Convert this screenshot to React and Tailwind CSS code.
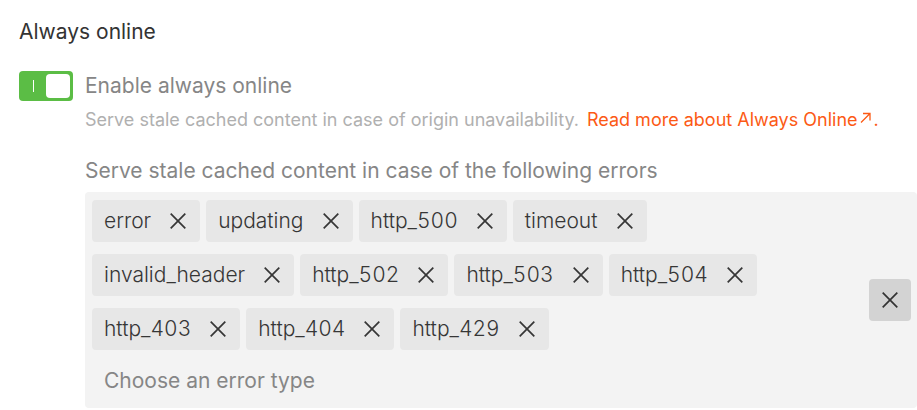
const TAGS = ['error', 'updating', 'http_500', 'timeout', 'invalid_header', 'http_502', 'http_503', 'http_504', 'http_403', 'http_404', 'http_429'];

function Cross() {
  return (
    <svg className="size-4" viewBox="0 0 16 16" fill="none" stroke="currentColor" strokeWidth="1.7" aria-hidden="true">
      <path d="M.7.7 15.3 15.3M15.3.7.7 15.3" />
    </svg>
  );
}

export default function App() {
  return (
    <main className="pt-4 pl-[19px] font-['Inter',sans-serif] text-[21px] text-[#868686]">
      <h2 className="leading-8 text-[#333333]">Always online</h2>
      <section className="mt-[23px] flex items-start gap-3">
        <label className="relative flex h-[30px] w-[54px] shrink-0 items-center justify-end rounded-sm bg-[#5bbd45] p-[3px]">
          <input type="checkbox" defaultChecked aria-labelledby="enable-label" className="absolute inset-0 size-full cursor-pointer appearance-none" />
          <span className="mr-3 h-3 w-px bg-white" />
          <span className="h-6 w-6 rounded-sm bg-white" />
        </label>
        <div className="min-w-0 grow">
          <p id="enable-label" className="leading-[30px]">Enable always online</p>
          <p className="mt-[5px] text-lg leading-7 text-[#b0b0b0]">
            Serve stale cached content in case of origin unavailability.
            <a href="#always-online" className="ml-2 text-[#fc5a15]">
              Read more about Always Online
              <svg className="ml-px inline h-[14px] w-3 align-baseline" viewBox="0 0 12 14" fill="none" stroke="currentColor" strokeWidth="1.3" aria-hidden="true">
                <path d="M2 10.5 11 1.5M4 1.5H11V8.5" />
              </svg>
              <span className="ml-[3px]">.</span>
            </a>
          </p>
          <label htmlFor="error-type" className="mt-[23px] block leading-7">Serve stale cached content in case of the following errors</label>
          <div className="mt-[7px] flex items-center rounded-sm bg-[#f3f3f3] pr-[6px]">
            <div className="min-w-0 grow px-[7px] pt-2 pb-[10px]">
              <ul className="flex max-w-[680px] flex-wrap gap-x-[6px] gap-y-3 text-[#363636] tabular-nums">
                {TAGS.map((tag) => (
                  <li key={tag} className="flex h-[42px] items-center rounded-sm bg-[#e7e7e7] pl-3 font-light">
                    {tag}
                    <button type="button" aria-label={`Remove ${tag}`} className="flex h-full items-center pr-[14px] pl-[19px]"><Cross /></button>
                  </li>
                ))}
              </ul>
              <input id="error-type" placeholder="Choose an error type" className="mt-3 block h-9 w-full px-3 outline-none placeholder:text-[#868686]" />
            </div>
            <button type="button" aria-label="Clear all" className="flex size-[42px] shrink-0 items-center justify-center rounded-sm bg-[#d3d3d3] text-[#333333]"><Cross /></button>
          </div>
        </div>
      </section>
    </main>
  );
}
